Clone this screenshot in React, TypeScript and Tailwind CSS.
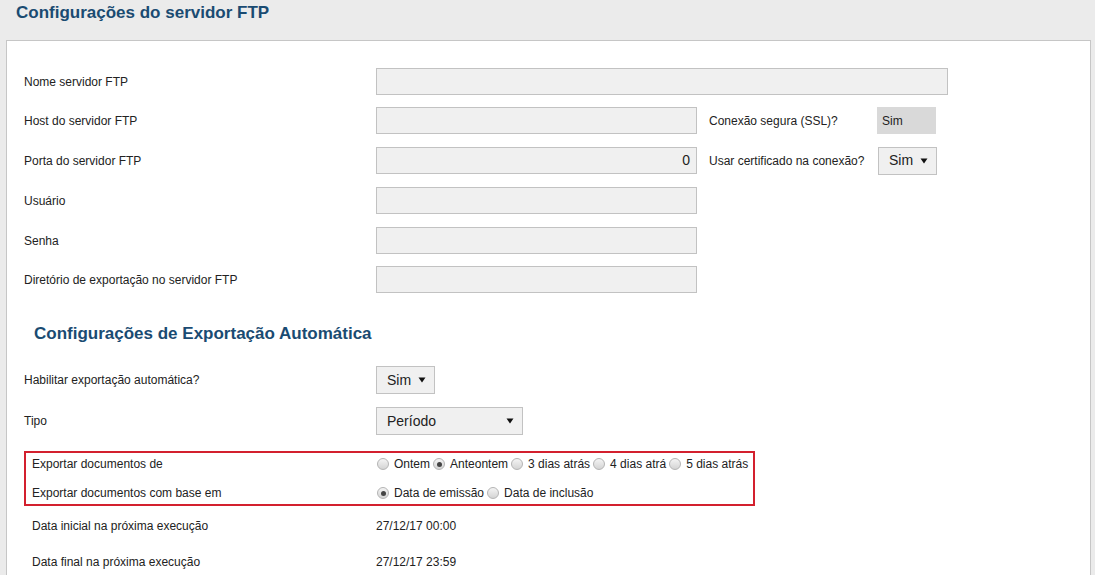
import React from "react";

const font = { fontFamily: '"Liberation Sans", Arial, sans-serif' };

function Radio({ checked }: { checked?: boolean }) {
  return (
    <span className="relative inline-flex h-[12px] w-[12px] shrink-0 items-center justify-center rounded-full border border-[#b4b4b4] bg-gradient-to-b from-[#f4f4f4] to-[#d4d4d4]">
      {checked && <span className="h-[5px] w-[5px] rounded-full bg-[#444]" />}
    </span>
  );
}

function RadioOpt({ label, checked }: { label: string; checked?: boolean }) {
  return (
    <span className="inline-flex items-center">
      <Radio checked={checked} />
      <span className="ml-[5px] mr-[3px] whitespace-nowrap">{label}</span>
    </span>
  );
}

function Input({ w, value, right }: { w: string; value?: string; right?: boolean }) {
  return (
    <div
      className={`${w} flex h-[27px] items-center border border-[#c2c2c2] bg-[#f0f0f0] px-[6px] text-[14px] text-[#222] ${
        right ? "justify-end" : ""
      }`}
    >
      {value}
    </div>
  );
}

function Select({ w, value }: { w: string; value: string }) {
  return (
    <div
      className={`${w} flex h-[28px] items-center justify-between border border-[#c2c2c2] bg-[#f0f0f0] pl-[10px] pr-[8px] text-[14px] text-[#222]`}
    >
      <span>{value}</span>
      <svg width="8" height="6" viewBox="0 0 8 6">
        <path d="M0.5 0.5 L7.5 0.5 L4 5.5 Z" fill="#111" />
      </svg>
    </div>
  );
}

function Row({ label, children, className = "" }: { label: string; children?: React.ReactNode; className?: string }) {
  return (
    <div className={`flex h-[27px] items-center ${className}`}>
      <div className="w-[352px] shrink-0 text-[12px] text-[#222]">{label}</div>
      {children}
    </div>
  );
}

export default function App() {
  return (
    <div style={font} className="h-[575px] w-[1095px] overflow-hidden bg-[#ebebeb]">
      <h1 className="pl-[16px] pt-[2px] text-[17px] font-bold leading-[22px] text-[#1a4b72]">
        Configurações do servidor FTP
      </h1>
      <div className="ml-[6px] mr-[4px] mt-[16px] h-[600px] border border-[#c6c6c6] bg-white pl-[17px] pt-[27px]">
        <div className="flex flex-col gap-[13px]">
          <Row label="Nome servidor FTP">
            <Input w="w-[572px]" />
          </Row>
          <Row label="Host do servidor FTP" className="-mt-[1px]">
            <Input w="w-[321px]" />
            <span className="ml-[12px] w-[168px] text-[12px] text-[#222]">Conexão segura (SSL)?</span>
            <div className="flex h-[27px] w-[59px] items-center bg-[#d9d9d9] pl-[5px] text-[12px] text-[#222]">
              Sim
            </div>
          </Row>
          <Row label="Porta do servidor FTP">
            <Input w="w-[321px]" value="0" right />
            <span className="ml-[12px] w-[169px] text-[12px] text-[#222]">Usar certificado na conexão?</span>
            <Select w="w-[59px]" value="Sim" />
          </Row>
          <Row label="Usuário">
            <Input w="w-[321px]" />
          </Row>
          <Row label="Senha">
            <Input w="w-[321px]" />
          </Row>
          <Row label="Diretório de exportação no servidor FTP" className="-mt-[1px]">
            <Input w="w-[321px]" />
          </Row>
        </div>

        <h2 className="ml-[10px] mt-[30px] text-[17px] font-bold leading-[22px] text-[#1a4b72]">
          Configurações de Exportação Automática
        </h2>

        <div className="mt-[21px] flex flex-col gap-[13px]">
          <div className="flex h-[28px] items-center">
            <div className="w-[352px] shrink-0 text-[12px] text-[#222]">Habilitar exportação automática?</div>
            <Select w="w-[59px]" value="Sim" />
          </div>
          <div className="flex h-[28px] items-center">
            <div className="w-[352px] shrink-0 text-[12px] text-[#222]">Tipo</div>
            <Select w="w-[147px]" value="Período" />
          </div>
        </div>

        <div className="mt-[16px] w-[731px] border-2 border-[#d3202e] pl-[6px] pt-[1px] pb-[1px] text-[12px] text-[#222]">
          <div className="flex h-[20px] items-center">
            <div className="w-[345px] shrink-0">Exportar documentos de</div>
            <RadioOpt label="Ontem" />
            <RadioOpt label="Anteontem" checked />
            <RadioOpt label="3 dias atrás" />
            <RadioOpt label="4 dias atrá" />
            <RadioOpt label="5 dias atrás" />
          </div>
          <div className="mt-[9px] flex h-[20px] items-center">
            <div className="w-[345px] shrink-0">Exportar documentos com base em</div>
            <RadioOpt label="Data de emissão" checked />
            <RadioOpt label="Data de inclusão" />
          </div>
        </div>

        <div className="pl-[8px] text-[12px] text-[#222]">
          <div className="mt-[10px] flex h-[20px] items-center">
            <div className="w-[344px] shrink-0">Data inicial na próxima execução</div>
            <span>27/12/17 00:00</span>
          </div>
          <div className="mt-[16px] flex h-[20px] items-center">
            <div className="w-[344px] shrink-0">Data final na próxima execução</div>
            <span>27/12/17 23:59</span>
          </div>
        </div>
      </div>
    </div>
  );
}
